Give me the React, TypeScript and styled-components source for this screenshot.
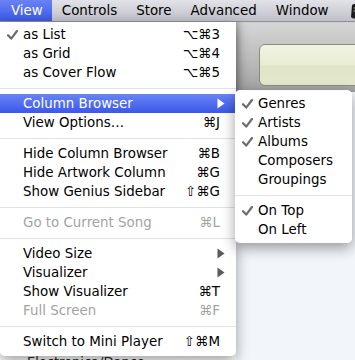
import React from 'react'
import styled, { createGlobalStyle } from 'styled-components'

const GlobalStyle = createGlobalStyle`
	html, body {
		margin: 0;
		padding: 0;
		background: #ffffff;
	}
	* {
		box-sizing: border-box;
	}
`

type Item =
	| { kind: 'sep' }
	| {
			kind?: 'item'
			label: string
			checked?: boolean
			shortcut?: string
			submenu?: boolean
			disabled?: boolean
			highlight?: boolean
	  }

const viewMenu: Item[] = [
	{ label: 'as List', checked: true, shortcut: '⌥⌘3' },
	{ label: 'as Grid', shortcut: '⌥⌘4' },
	{ label: 'as Cover Flow', shortcut: '⌥⌘5' },
	{ kind: 'sep' },
	{ label: 'Column Browser', submenu: true, highlight: true },
	{ label: 'View Options…', shortcut: '⌘J' },
	{ kind: 'sep' },
	{ label: 'Hide Column Browser', shortcut: '⌘B' },
	{ label: 'Hide Artwork Column', shortcut: '⌘G' },
	{ label: 'Show Genius Sidebar', shortcut: '⇧⌘G' },
	{ kind: 'sep' },
	{ label: 'Go to Current Song', shortcut: '⌘L', disabled: true },
	{ kind: 'sep' },
	{ label: 'Video Size', submenu: true },
	{ label: 'Visualizer', submenu: true },
	{ label: 'Show Visualizer', shortcut: '⌘T' },
	{ label: 'Full Screen', shortcut: '⌘F', disabled: true },
	{ kind: 'sep' },
	{ label: 'Switch to Mini Player', shortcut: '⇧⌘M' },
]

const browserMenu: Item[] = [
	{ label: 'Genres', checked: true },
	{ label: 'Artists', checked: true },
	{ label: 'Albums', checked: true },
	{ label: 'Composers' },
	{ label: 'Groupings' },
	{ kind: 'sep' },
	{ label: 'On Top', checked: true },
	{ label: 'On Left' },
]

const titles = ['View', 'Controls', 'Store', 'Advanced', 'Window']

const CheckMark = ({ color }: { color: string }) => (
	<svg width='11' height='10' viewBox='0 0 11 10'>
		<path
			d='M1 5.2 L4.2 8.6 L10 1'
			fill='none'
			stroke={color}
			strokeWidth='2.2'
			strokeLinecap='round'
			strokeLinejoin='round'
		/>
	</svg>
)

const SubArrow = ({ color }: { color: string }) => (
	<svg width='8' height='11' viewBox='0 0 8 11'>
		<path d='M0.5 0.5 L7.5 5.5 L0.5 10.5 Z' fill={color} />
	</svg>
)

const ScriptIcon = () => (
	<svg width='12' height='16' viewBox='0 0 12 16'>
		<path
			d='M2 2 C4 0 9 0 11 2 L9 14 C7 16 3 16 1 14 Z'
			fill='#1e1e1e'
		/>
		<path d='M4 5 L8 5 M3.6 8 L7.6 8' stroke='#bbbbbb' strokeWidth='1' />
	</svg>
)

function MenuList({ items }: { items: Item[] }) {
	return (
		<>
			{items.map((item, i) => {
				if (item.kind === 'sep') return <Separator key={i} />
				const active = !!item.highlight
				return (
					<MenuRow key={i} $highlight={active} $disabled={item.disabled}>
						<CheckSlot>
							{item.checked && (
								<CheckMark color={active ? '#ffffff' : '#6c6c6c'} />
							)}
						</CheckSlot>
						<Label>{item.label}</Label>
						{item.shortcut && <Shortcut>{item.shortcut}</Shortcut>}
						{item.submenu && (
							<ArrowSlot>
								<SubArrow color={active ? '#ffffff' : '#5b5b5b'} />
							</ArrowSlot>
						)}
					</MenuRow>
				)
			})}
		</>
	)
}

export default function App() {
	return (
		<>
			<GlobalStyle />
			<Screen>
				<MenuBar>
					{titles.map((t, i) => (
						<MenuTitle key={t} $active={i === 0}>
							{t}
						</MenuTitle>
					))}
					<IconSlot>
						<ScriptIcon />
					</IconSlot>
				</MenuBar>
				<Workspace>
					<SourcePane>
						<GenreItem>Electronica/Dance</GenreItem>
					</SourcePane>
					<RightPane>
						<Toolbar>
							<Lcd />
						</Toolbar>
						<Browser />
					</RightPane>
				</Workspace>
				<DropMenu>
					<MenuList items={viewMenu} />
				</DropMenu>
				<SubMenu>
					<MenuList items={browserMenu} />
				</SubMenu>
			</Screen>
		</>
	)
}

const Screen = styled.div`
	position: relative;
	width: 355px;
	height: 360px;
	overflow: hidden;
	display: flex;
	flex-direction: column;
	font-family: 'DejaVu Sans', 'Liberation Sans', sans-serif;
	background: #ffffff;
`

const MenuBar = styled.div`
	display: flex;
	align-items: stretch;
	height: 22px;
	flex: none;
	background: linear-gradient(#e2e2e8, #c0c0ca);
	border-bottom: 1px solid #8e8e96;
	white-space: nowrap;
`

const MenuTitle = styled.div<{ $active?: boolean }>`
	display: flex;
	align-items: center;
	padding: 0 9px 0 ${(p) => (p.$active ? '11px' : '10px')};
	font-size: 13.4px;
	color: ${(p) => (p.$active ? '#ffffff' : '#000000')};
	background: ${(p) =>
		p.$active ? 'linear-gradient(#6983f5, #3b58e7)' : 'transparent'};
`

const IconSlot = styled.div`
	display: flex;
	align-items: center;
	padding-left: 12px;
`

const Workspace = styled.div`
	flex: 1;
	display: flex;
`

const SourcePane = styled.div`
	width: 236px;
	flex: none;
	display: flex;
	flex-direction: column;
	padding: 332px 0 0 27px;
	background: #ffffff;
`

const GenreItem = styled.div`
	font-size: 13px;
	line-height: 16px;
	color: #222222;
`

const RightPane = styled.div`
	flex: 1;
	display: flex;
	flex-direction: column;
`

const Toolbar = styled.div`
	height: 70px;
	flex: none;
	padding: 22px 0 0 23px;
	background: linear-gradient(#d6d6d6, #b8b8b8 60%, #a1a1a1);
	box-shadow: inset 6px 0 6px -4px rgba(0, 0, 0, 0.25);
`

const Lcd = styled.div`
	height: 42px;
	margin-right: -10px;
	border-radius: 6px;
	border: 1px solid #8c8c78;
	background: linear-gradient(#f1f3e2, #e9ecd4 50%, #e0e5c6 52%, #e3e7cc);
`

const Browser = styled.div`
	flex: 1;
	background: #f2f5fa;
`

const DropMenu = styled.div`
	position: absolute;
	top: 22px;
	left: 0;
	width: 236px;
	padding: 3px 0 5px;
	background: rgba(255, 255, 255, 0.98);
	border-radius: 0 0 5px 5px;
	box-shadow: 0 5px 14px rgba(0, 0, 0, 0.38);
`

const SubMenu = styled.div`
	position: absolute;
	top: 90px;
	left: 235px;
	width: 117px;
	padding: 4px 0 4px;
	background: rgba(255, 255, 255, 0.98);
	border-radius: 5px;
	box-shadow: 0 5px 14px rgba(0, 0, 0, 0.38);
`

const MenuRow = styled.div<{ $highlight?: boolean; $disabled?: boolean }>`
	display: flex;
	align-items: center;
	height: 19px;
	padding-right: 16px;
	font-size: 13.4px;
	color: ${(p) => (p.$highlight ? '#ffffff' : p.$disabled ? '#a3a3a3' : '#000000')};
	background: ${(p) =>
		p.$highlight ? 'linear-gradient(#6983f5, #3b58e7)' : 'transparent'};
	white-space: nowrap;
`

const CheckSlot = styled.div`
	width: 23px;
	flex: none;
	display: flex;
	align-items: center;
	padding-left: 7px;
`

const Label = styled.span`
	flex: 1;
`

const Shortcut = styled.span`
	flex: none;
`

const ArrowSlot = styled.span`
	flex: none;
	display: flex;
	margin-right: -5px;
`

const Separator = styled.div`
	height: 12px;
	display: flex;
	align-items: center;
	&::after {
		content: '';
		flex: 1;
		height: 1px;
		background: #e2e2e2;
	}
`
